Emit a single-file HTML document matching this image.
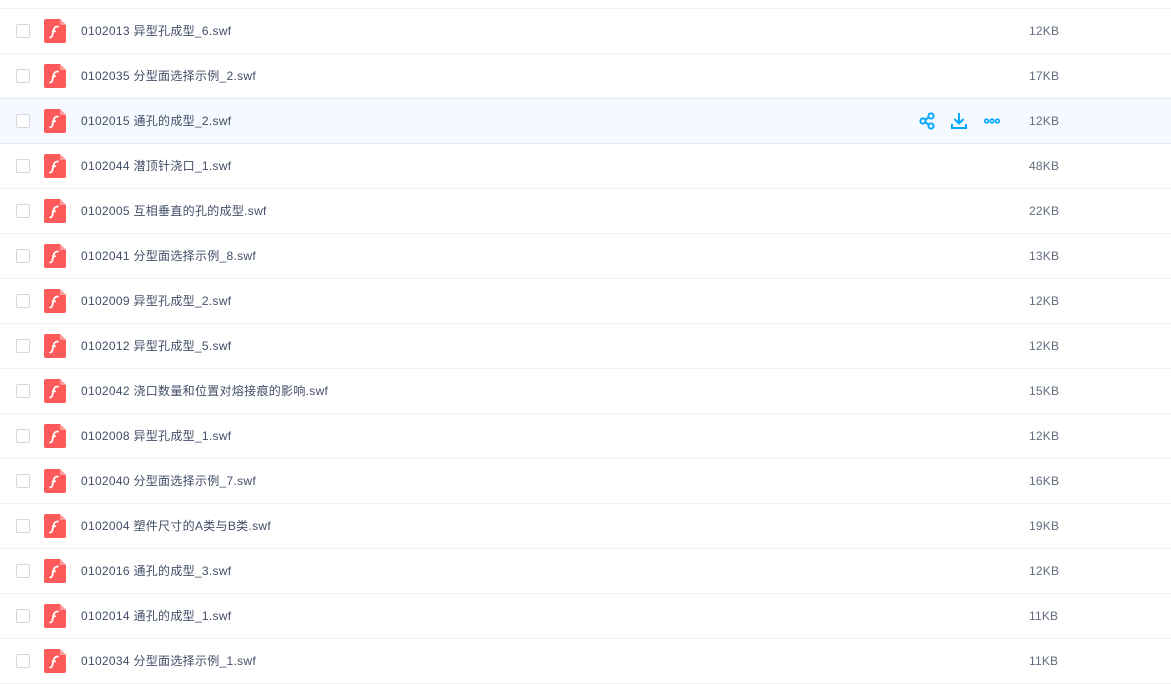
<!DOCTYPE html>
<html><head><meta charset="utf-8"><style>
body{margin:0;width:1171px;height:679px;overflow:hidden;background:#fff;font-family:"Liberation Sans","Noto Sans CJK SC",sans-serif;}
.list{position:absolute;top:8px;left:0;width:1171px;border-top:1px solid #f1f3f7;}
.row{position:relative;height:44px;border-bottom:1px solid #f1f3f7;}
.row.h{background:#f4faff;border-top:1px solid #dcebf8;border-bottom:1px solid #dcebf8;margin-top:-1px;}
.cb{position:absolute;left:16px;top:15px;width:12px;height:12px;border:1px solid #d4d7de;border-radius:2px;background:#fff;}
.ic{position:absolute;left:44px;top:10px;}
.nm{position:absolute;left:81px;top:14px;font-size:12px;color:#424e67;line-height:16px;letter-spacing:0.3px;}
.sz{position:absolute;left:1029px;top:14px;font-size:12px;color:#636d7e;line-height:16px;letter-spacing:0.2px;}
.acts{position:absolute;left:919px;top:13px;}
</style></head><body>
<div class="list"></div>
<script>
const d=[["0102013 异型孔成型_6.swf","12KB"],["0102035 分型面选择示例_2.swf","17KB"],["0102015 通孔的成型_2.swf","12KB"],["0102044 潜顶针浇口_1.swf","48KB"],["0102005 互相垂直的孔的成型.swf","22KB"],["0102041 分型面选择示例_8.swf","13KB"],["0102009 异型孔成型_2.swf","12KB"],["0102012 异型孔成型_5.swf","12KB"],["0102042 浇口数量和位置对熔接痕的影响.swf","15KB"],["0102008 异型孔成型_1.swf","12KB"],["0102040 分型面选择示例_7.swf","16KB"],["0102004 塑件尺寸的A类与B类.swf","19KB"],["0102016 通孔的成型_3.swf","12KB"],["0102014 通孔的成型_1.swf","11KB"],["0102034 分型面选择示例_1.swf","11KB"]];
const icon='<svg class="ic" width="22" height="24" viewBox="0 0 22 24"><path d="M2 0H16L22 6V22A2 2 0 0 1 20 24H2A2 2 0 0 1 0 22V2A2 2 0 0 1 2 0Z" fill="#fd5a59"/><path d="M16 0V6H22Z" fill="#ff9a99"/><path d="M14 7.5C10.5 7.5 10 9.5 9.3 12.5L8.3 16.5C7.8 18 7 18.5 6 18.5" stroke="#fff" stroke-width="1.8" fill="none" stroke-linecap="round"/><path d="M8 12.3H12" stroke="#fff" stroke-width="1.6"/></svg>';
const acts='<svg class="acts" width="90" height="18" viewBox="0 0 90 18"><g fill="none" stroke="#06a7ff" stroke-width="2"><circle cx="4" cy="9" r="2.6"/><circle cx="12" cy="4" r="2.6"/><circle cx="12" cy="14" r="2.6"/><path d="M6.3 7.5L9.8 5.5M6.3 10.5L9.8 12.5"/><path d="M40 1V11M35.5 7L40 11.5L44.5 7M33 12V16H47V12"/></g><g fill="none" stroke="#06a7ff" stroke-width="1.6"><circle cx="67.5" cy="9" r="1.8"/><circle cx="73" cy="9" r="1.8"/><circle cx="78.5" cy="9" r="1.8"/></g></svg>';
let h='';d.forEach((r,i)=>{h+=`<div class="row${i==2?' h':''}"><div class="cb"></div>${icon}<div class="nm">${r[0]}</div>${i==2?acts:''}<div class="sz">${r[1]}</div></div>`});
document.querySelector('.list').innerHTML=h;
</script>
</body></html>
